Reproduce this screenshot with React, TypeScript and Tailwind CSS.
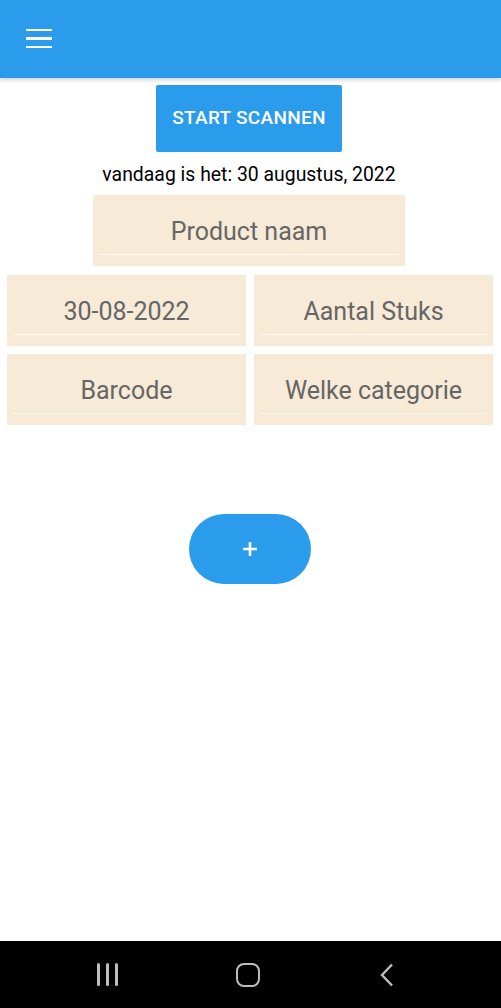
const font = { fontFamily: "Roboto, 'Noto Sans', sans-serif" }

function Field({ label, className = "" }: { label: string; className?: string }) {
  return (
    <div className={`relative flex h-[71px] items-start justify-center bg-[#f7ead7] ${className}`}>
      <span className="mt-[23px] text-[25px] leading-[28px] text-[#666666]">{label}</span>
      <div className="absolute bottom-[11px] left-[6px] right-[6px] h-[1px] bg-[#fdf8f1]" />
    </div>
  )
}

export default function App() {
  return (
    <div className="flex h-[1008px] w-[501px] flex-col bg-white" style={font}>
      <header className="relative z-10 flex h-[78px] shrink-0 items-center bg-[#2b9beb] px-[26px] shadow-[0_2px_4px_rgba(0,0,0,0.18)]">
        <div className="flex w-[26px] flex-col gap-[6px] pb-[1px]">
          <span className="h-[2.5px] bg-white" />
          <span className="h-[2.5px] bg-white" />
          <span className="h-[2.5px] bg-white" />
        </div>
      </header>

      <main className="flex flex-1 flex-col items-center">
        <div className="flex w-full flex-col items-center pr-[3px]">
          <button className="mt-[7px] h-[67px] w-[186px] rounded-[2px] bg-[#2b9beb] text-[19px] font-medium tracking-[0.3px] text-white">
            START SCANNEN
          </button>
          <p className="mt-[12px] text-[19.4px] leading-[22px] text-black">vandaag is het: 30 augustus, 2022</p>

          <Field label="Product naam" className="mt-[9px] w-[312px]" />
        </div>

        <div className="mt-[9px] grid w-full grid-cols-2 gap-x-[8px] gap-y-[8px] pl-[7px] pr-[8px]">
          <Field label="30-08-2022" />
          <Field label="Aantal Stuks" />
          <Field label="Barcode" />
          <Field label="Welke categorie" />
        </div>

        <button className="mt-[89px] mr-[2px] flex h-[70px] w-[122px] items-center justify-center rounded-full bg-[#2b9beb]">
          <svg width="18" height="18" viewBox="0 0 18 18">
            <path d="M9 2v14M2 9h14" stroke="white" strokeWidth="2.6" />
          </svg>
        </button>
      </main>

      <nav className="flex h-[67px] shrink-0 items-center bg-black pl-[97px]">
        <div className="flex gap-[6.5px]">
          <span className="h-[23px] w-[2.5px] rounded-sm bg-[#bdbdbd]" />
          <span className="h-[23px] w-[2.5px] rounded-sm bg-[#bdbdbd]" />
          <span className="h-[23px] w-[2.5px] rounded-sm bg-[#bdbdbd]" />
        </div>
        <div className="ml-[118px] h-[24px] w-[24px] rounded-[8px] border-[2.5px] border-[#bdbdbd]" />
        <svg className="ml-[120px]" width="14" height="24" viewBox="0 0 14 24">
          <path d="M12 1.5L2 12l10 10.5" fill="none" stroke="#bdbdbd" strokeWidth="2.4" />
        </svg>
      </nav>
    </div>
  )
}
